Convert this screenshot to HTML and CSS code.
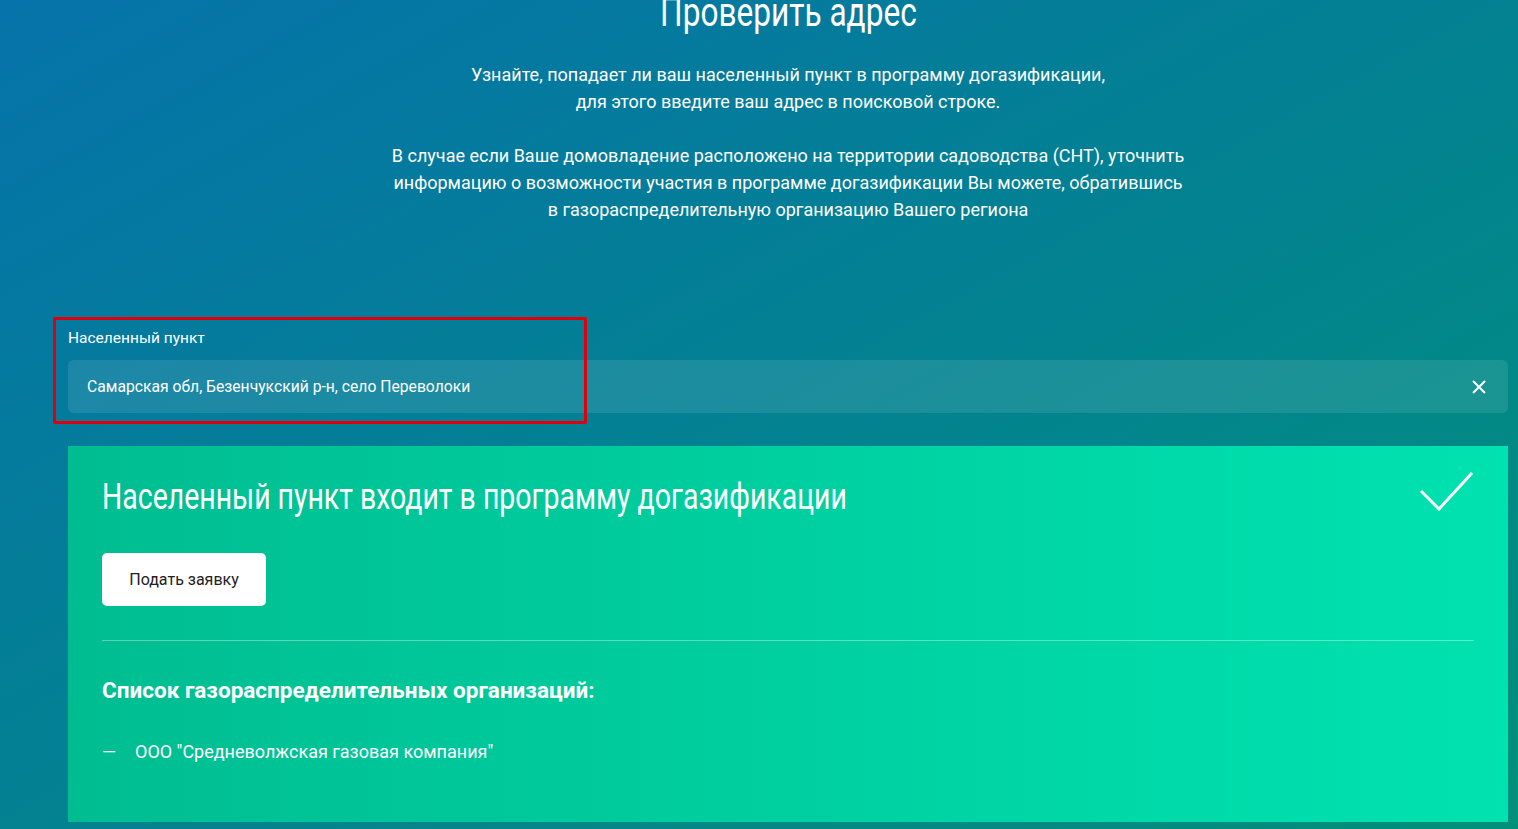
FILE: index.html
```html
<!DOCTYPE html>
<html lang="ru">
<head>
    <meta charset="UTF-8">
    <meta name="viewport" content="width=device-width, initial-scale=1.0">
    <title>Проверить адрес</title>
    <link rel="stylesheet" href="styles.css">
</head>
<body>
    <div class="page">
        <h1 class="title"><span>Проверить адрес</span></h1>
        <p class="intro">Узнайте, попадает ли ваш населенный пункт в программу догазификации,<br>для этого введите ваш адрес в поисковой строке.</p>
        <p class="intro">В случае если Ваше домовладение расположено на территории садоводства (СНТ), уточнить<br>информацию о возможности участия в программе догазификации Вы можете, обратившись<br>в газораспределительную организацию Вашего региона</p>

        <div class="search">
            <label class="search-label" for="place">Населенный пункт</label>
            <div class="search-field">
                <input type="text" id="place" value="Самарская обл, Безенчукский р-н, село Переволоки">
                <button class="clear-btn" aria-label="Очистить">
                    <svg width="14" height="14" viewBox="0 0 14 14"><path d="M1 1L13 13M13 1L1 13" stroke="#fff" stroke-width="2" fill="none"/></svg>
                </button>
            </div>
            <div class="highlight"></div>
        </div>

        <div class="result">
            <div class="result-head">
                <h2 class="result-title"><span>Населенный пункт входит в программу догазификации</span></h2>
                <svg class="check" width="54" height="42" viewBox="0 0 54 42"><path d="M1 20L19 38L52 2" stroke="#fff" stroke-width="3" fill="none"/></svg>
            </div>
            <button class="apply-btn">Подать заявку</button>
            <hr>
            <h3 class="org-title">Список газораспределительных организаций:</h3>
            <ul class="org-list">
                <li>ООО "Средневолжская газовая компания"</li>
            </ul>
        </div>
    </div>
</body>
</html>
```

FILE: styles.css
```css
body {
    margin: 0;
    padding: 0;
    font-family: Roboto, "Noto Sans", sans-serif;
    color: #fff;
    background: linear-gradient(to bottom right, #0673aa, #00907a);
    min-height: 829px;
    overflow: hidden;
}
.page {
    padding: 0 10px 0 68px;
    text-align: center;
}
/* condensed look: no narrow font installed, so squeeze Roboto */
.title {
    font-weight: 400;
    font-size: 40px;
    line-height: 48px;
    margin: -11px 0 24px;
}
.title span,
.result-title span {
    display: inline-block;
    transform: scaleX(0.79);
    white-space: nowrap;
}
.intro {
    font-size: 18px;
    font-weight: 400;
    line-height: 27px;
    margin: 0 0 27px;
}
.search {
    position: relative;
    text-align: left;
    margin-top: 105px;
}
.search-label {
    display: block;
    font-size: 15.5px;
    line-height: 20px;
    margin-bottom: 12px;
}
.search-field {
    display: flex;
    align-items: center;
    height: 53px;
    background: rgba(255, 255, 255, 0.1);
    border-radius: 6px;
    padding: 0 22px 0 19px;
}
.search-field input {
    flex: 1;
    background: none;
    border: none;
    outline: none;
    color: #fff;
    font-family: Roboto, sans-serif;
    font-size: 15.7px;
    padding: 0;
}
.clear-btn {
    background: none;
    border: none;
    padding: 0;
    cursor: pointer;
    display: flex;
}
/* red annotation frame */
.highlight {
    position: absolute;
    left: -15px;
    top: -11px;
    width: 528px;
    height: 101px;
    border: 3px solid #e0000b;
    border-radius: 2px;
}
.result {
    margin-top: 33px;
    text-align: left;
    background: linear-gradient(to right, #00bd91, #00e2b0);
    padding: 25px 34px 40px;
    height: 376px;
    box-sizing: border-box;
}
.result-head {
    display: flex;
    justify-content: space-between;
    align-items: flex-start;
}
.result-title {
    font-weight: 400;
    font-size: 36px;
    line-height: 52px;
    margin: 0;
}
.result-title span {
    transform-origin: left center;
}
.apply-btn {
    margin-top: 30px;
    background: #fff;
    color: #222;
    border: none;
    border-radius: 5px;
    width: 164px;
    height: 53px;
    font-family: Roboto, sans-serif;
    font-size: 16px;
    font-weight: 400;
    cursor: pointer;
}
hr {
    border: 0;
    height: 1px;
    background: rgba(255, 255, 255, 0.35);
    margin: 34px 0 0;
}
.org-title {
    font-size: 22.5px;
    font-weight: 700;
    line-height: 30px;
    margin: 34px 0 0;
}
.org-list {
    list-style: none;
    margin: 35px 0 0;
    padding: 0;
    font-size: 18px;
    line-height: 24px;
}
.org-list li::before {
    content: "—";
    display: inline-block;
    width: 33px;
}
```
